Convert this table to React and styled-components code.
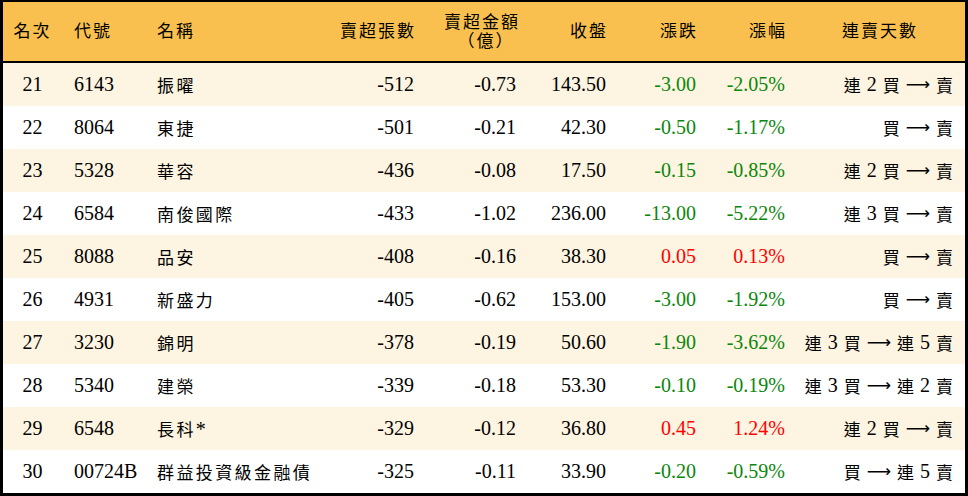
import React from "react";
import styled, { createGlobalStyle } from "styled-components";

const Global = createGlobalStyle`
  html, body { margin: 0; padding: 0; background: #fff; }
  body { font-family: "Liberation Serif", "Noto Sans CJK TC", serif; color: #000; }
`;

const COLS = "59px 83px 155px 124px 102px 90px 90px 89px 170px";

const Table = styled.div`
  width: 968px;
  height: 496px;
  box-sizing: border-box;
  border-style: solid;
  border-color: #000;
  border-width: 2px 3px 3px 3px;
  display: flex;
  flex-direction: column;
  overflow: hidden;
`;

const HeaderRow = styled.div`
  display: grid;
  grid-template-columns: ${COLS};
  height: 59px;
  background: #f9c04f;
  border-bottom: 2px solid #000;
  align-items: center;
`;

const Row = styled.div`
  display: grid;
  grid-template-columns: ${COLS};
  height: 43px;
  align-items: center;
  background: ${(p) => (p.$striped ? "#fdf4e1" : "#ffffff")};
`;

const HeadCell = styled.div`
  font-family: "Liberation Serif", "Noto Sans CJK TC", serif;
  font-size: 17px;
  letter-spacing: 2px;
  line-height: 19px;
  text-align: ${(p) => p.$align || "left"};
  padding-left: ${(p) => p.$pl || 0}px;
  padding-right: ${(p) => p.$pr || 0}px;
  white-space: nowrap;
`;

const TwoLine = styled.span`
  display: inline-flex;
  flex-direction: column;
  align-items: center;
  margin-right: -2px;
`;

const Paren = styled.span`
  letter-spacing: 0;
  display: flex;
  gap: 2px;
  padding-left: 6px;
`;

const Cell = styled.div`
  font-family: "Liberation Serif", "Noto Sans CJK TC", serif;
  font-size: 20px;
  text-align: ${(p) => p.$align || "left"};
  padding-left: ${(p) => p.$pl || 0}px;
  padding-right: ${(p) => p.$pr || 0}px;
  color: ${(p) => p.$color || "#000"};
  white-space: nowrap;
`;

const Streak = styled.div`
  display: flex;
  justify-content: flex-end;
  align-items: center;
  gap: 6px;
  padding-right: 12px;
  font-family: "Liberation Serif", "Noto Sans CJK TC", serif;
  font-size: 20px;
`;

const Han = styled.span`
  font-size: 17px;
  letter-spacing: ${(p) => (p.$spaced ? "2.4px" : "0")};
`;

const Arrow = styled.span`
  font-family: "DejaVu Sans", sans-serif;
  font-size: 17px;
  line-height: 1;
`;

const rows = [
  [21, "6143", "振曜", "-512", "-0.73", "143.50", "-3.00", "-2.05%", "連 2 買 → 賣"],
  [22, "8064", "東捷", "-501", "-0.21", "42.30", "-0.50", "-1.17%", "買 → 賣"],
  [23, "5328", "華容", "-436", "-0.08", "17.50", "-0.15", "-0.85%", "連 2 買 → 賣"],
  [24, "6584", "南俊國際", "-433", "-1.02", "236.00", "-13.00", "-5.22%", "連 3 買 → 賣"],
  [25, "8088", "品安", "-408", "-0.16", "38.30", "0.05", "0.13%", "買 → 賣"],
  [26, "4931", "新盛力", "-405", "-0.62", "153.00", "-3.00", "-1.92%", "買 → 賣"],
  [27, "3230", "錦明", "-378", "-0.19", "50.60", "-1.90", "-3.62%", "連 3 買 → 連 5 賣"],
  [28, "5340", "建榮", "-339", "-0.18", "53.30", "-0.10", "-0.19%", "連 3 買 → 連 2 賣"],
  [29, "6548", "長科*", "-329", "-0.12", "36.80", "0.45", "1.24%", "連 2 買 → 賣"],
  [30, "00724B", "群益投資級金融債", "-325", "-0.11", "33.90", "-0.20", "-0.59%", "買 → 連 5 賣"],
];

const GREEN = "#0b870b";
const RED = "#ff0000";

function StreakText({ text }) {
  const tokens = text.split(" ");
  return (
    <Streak>
      {tokens.map((t, i) =>
        t === "→" ? (
          <Arrow key={i}>⟶</Arrow>
        ) : /[\u4e00-\u9fff]/.test(t) ? (
          <Han key={i}>{t}</Han>
        ) : (
          <span key={i}>{t}</span>
        )
      )}
    </Streak>
  );
}

function Name({ text }) {
  const han = text.replace(/\*/g, "");
  const star = text.endsWith("*");
  return (
    <Cell $pl={12}>
      <Han $spaced>{han}</Han>
      {star && "*"}
    </Cell>
  );
}

export default function App() {
  return (
    <>
      <Global />
      <Table>
        <HeaderRow>
          <HeadCell $align="center">名次</HeadCell>
          <HeadCell $pl={12}>代號</HeadCell>
          <HeadCell $pl={12}>名稱</HeadCell>
          <HeadCell $align="right" $pr={8}>賣超張數</HeadCell>
          <HeadCell $align="right" $pr={8}>
            <TwoLine>
              <span>賣超金額</span>
              <Paren>
                <span>（</span>
                <span>億</span>
                <span>）</span>
              </Paren>
            </TwoLine>
          </HeadCell>
          <HeadCell $align="right" $pr={8}>收盤</HeadCell>
          <HeadCell $align="right" $pr={8}>漲跌</HeadCell>
          <HeadCell $align="right" $pr={8}>漲幅</HeadCell>
          <HeadCell $align="center">連賣天數</HeadCell>
        </HeaderRow>
        {rows.map((r, i) => {
          const up = !r[6].startsWith("-");
          const c = up ? RED : GREEN;
          return (
            <Row key={r[0]} $striped={i % 2 === 0}>
              <Cell $align="center">{r[0]}</Cell>
              <Cell $pl={12}>{r[1]}</Cell>
              <Name text={r[2]} />
              <Cell $align="right" $pr={10}>{r[3]}</Cell>
              <Cell $align="right" $pr={10}>{r[4]}</Cell>
              <Cell $align="right" $pr={10}>{r[5]}</Cell>
              <Cell $align="right" $pr={10} $color={c}>{r[6]}</Cell>
              <Cell $align="right" $pr={10} $color={c}>{r[7]}</Cell>
              <StreakText text={r[8]} />
            </Row>
          );
        })}
      </Table>
    </>
  );
}
